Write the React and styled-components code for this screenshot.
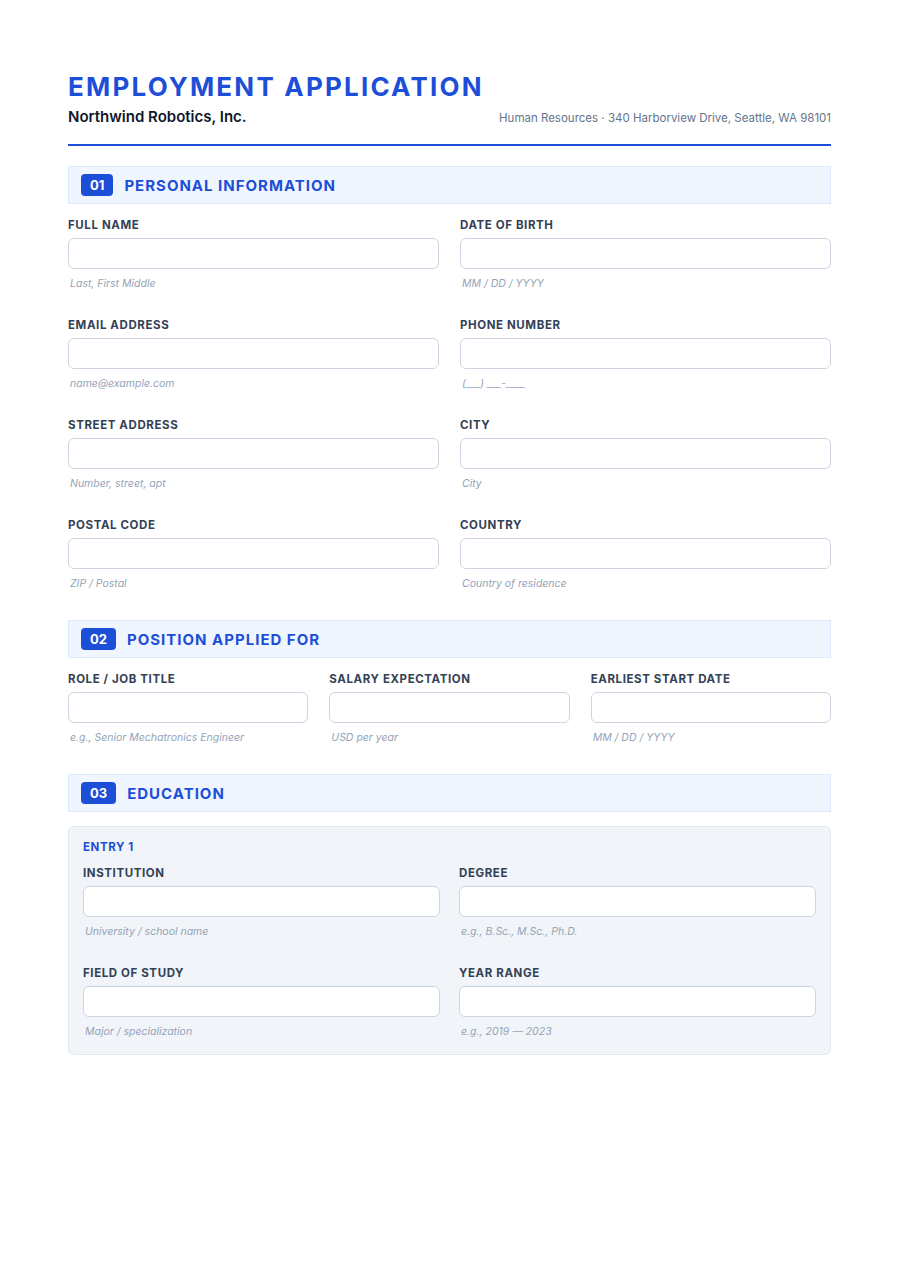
import React from 'react';
import styled, { createGlobalStyle } from 'styled-components';

const GlobalStyle = createGlobalStyle`
  html, body {
    margin: 0;
    padding: 0;
    background: #fff;
    font-family: 'Inter', 'Noto Sans', sans-serif;
  }
`;

const Page = styled.div`
  padding: 70px 69px 60px 68px;
`;

const Title = styled.h1`
  margin: 0;
  font-size: 26px;
  line-height: 34px;
  font-weight: 700;
  letter-spacing: 2.2px;
  color: #1d4ed8;
`;

const SubRow = styled.div`
  display: flex;
  justify-content: space-between;
  align-items: baseline;
  margin-top: 3px;
  padding-bottom: 18px;
  border-bottom: 2px solid #1d4ed8;
`;

const Company = styled.div`
  font-size: 15px;
  font-weight: 600;
  color: #0f172a;
`;

const Address = styled.div`
  font-size: 11.5px;
  color: #64748b;
`;

const SectionHeader = styled.div`
  display: flex;
  align-items: center;
  gap: 11px;
  height: 36px;
  padding: 0 12px;
  margin-top: ${({ $first }) => ($first ? '20px' : '30px')};
  margin-bottom: 14px;
  background: #eff6ff;
  border: 1px solid #dbeafe;
`;

const Badge = styled.span`
  background: #1d4ed8;
  color: #fff;
  font-size: 13px;
  font-weight: 700;
  border-radius: 4px;
  padding: 3px 9px;
  line-height: 16px;
`;

const SectionTitle = styled.span`
  color: #1d4ed8;
  font-size: 15px;
  font-weight: 700;
  letter-spacing: 1px;
`;

const Grid = styled.div`
  display: grid;
  grid-template-columns: repeat(${({ $cols }) => $cols}, 1fr);
  column-gap: ${({ $gap }) => $gap || 21}px;
  row-gap: 28px;
`;

const Field = styled.div`
  display: flex;
  flex-direction: column;
`;

const Label = styled.div`
  font-size: 11.5px;
  line-height: 14px;
  font-weight: 700;
  letter-spacing: 0.6px;
  color: #334155;
  margin-bottom: 6px;
`;

const Input = styled.div`
  height: 29px;
  background: #fff;
  border: 1px solid #cbd5e1;
  border-radius: 6px;
`;

const Hint = styled.div`
  margin-top: 8px;
  margin-left: 2px;
  font-size: 10.5px;
  line-height: 13px;
  font-style: italic;
  color: #94a3b8;
`;

const EntryBox = styled.div`
  margin-top: 12px;
  padding: 13px 14px 16px;
  background: #f1f5f9;
  border: 1px solid #e2e8f0;
  border-radius: 6px;
`;

const EntryTitle = styled.div`
  font-size: 11.5px;
  line-height: 14px;
  font-weight: 700;
  letter-spacing: 0.6px;
  color: #1d4ed8;
  margin-bottom: 12px;
`;

const F = ({ label, hint }) => (
  <Field>
    <Label>{label}</Label>
    <Input />
    <Hint>{hint}</Hint>
  </Field>
);

const Section = ({ num, title, first }) => (
  <SectionHeader $first={first}>
    <Badge>{num}</Badge>
    <SectionTitle>{title}</SectionTitle>
  </SectionHeader>
);

export default function App() {
  return (
    <>
      <GlobalStyle />
      <Page>
        <Title>EMPLOYMENT APPLICATION</Title>
        <SubRow>
          <Company>Northwind Robotics, Inc.</Company>
          <Address>Human Resources · 340 Harborview Drive, Seattle, WA 98101</Address>
        </SubRow>

        <Section first num="01" title="PERSONAL INFORMATION" />
        <Grid $cols={2}>
          <F label="FULL NAME" hint="Last, First Middle" />
          <F label="DATE OF BIRTH" hint="MM / DD / YYYY" />
          <F label="EMAIL ADDRESS" hint="name@example.com" />
          <F label="PHONE NUMBER" hint="(___) ___-____" />
          <F label="STREET ADDRESS" hint="Number, street, apt" />
          <F label="CITY" hint="City" />
          <F label="POSTAL CODE" hint="ZIP / Postal" />
          <F label="COUNTRY" hint="Country of residence" />
        </Grid>

        <Section num="02" title="POSITION APPLIED FOR" />
        <Grid $cols={3}>
          <F label="ROLE / JOB TITLE" hint="e.g., Senior Mechatronics Engineer" />
          <F label="SALARY EXPECTATION" hint="USD per year" />
          <F label="EARLIEST START DATE" hint="MM / DD / YYYY" />
        </Grid>

        <Section num="03" title="EDUCATION" />
        <EntryBox>
          <EntryTitle>ENTRY 1</EntryTitle>
          <Grid $cols={2} $gap={19}>
            <F label="INSTITUTION" hint="University / school name" />
            <F label="DEGREE" hint="e.g., B.Sc., M.Sc., Ph.D." />
            <F label="FIELD OF STUDY" hint="Major / specialization" />
            <F label="YEAR RANGE" hint="e.g., 2019 — 2023" />
          </Grid>
        </EntryBox>
      </Page>
    </>
  );
}
